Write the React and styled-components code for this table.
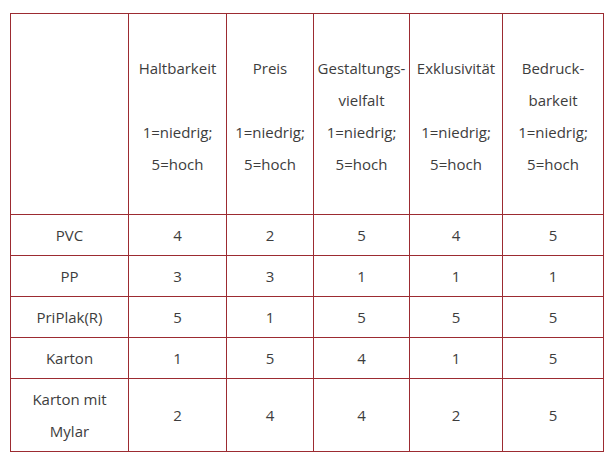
import React from 'react';
import styled, { createGlobalStyle } from 'styled-components';

const GlobalStyle = createGlobalStyle`
  body {
    margin: 0;
    background: #fff;
    font-family: "Open Sans", Tahoma, sans-serif;
  }
`;

const Page = styled.div`
  padding: 13px 9px 10px 10px;
`;

const Table = styled.table`
  border-collapse: collapse;
  table-layout: fixed;
  width: 593px;
  color: #3d3d3d;
  font-size: 15px;
  line-height: 32px;
`;

const Cell = styled.td`
  border: 1px solid #9c2b31;
  text-align: center;
  vertical-align: middle;
  padding: ${p => (p.head ? '4px 2px 0' : '0 2px')};
  font-weight: normal;
`;

const Row = styled.tr`
  height: ${p => p.h}px;
`;

const widths = [118, 98, 87, 96, 93, 101];

const headers = [
  ['Haltbarkeit', ''],
  ['Preis', ''],
  ['Gestaltungs-', 'vielfalt'],
  ['Exklusivität', ''],
  ['Bedruck-', 'barkeit']
];

const rows = [
  { name: ['PVC'], values: [4, 2, 5, 4, 5], h: 41 },
  { name: ['PP'], values: [3, 3, 1, 1, 1], h: 41 },
  { name: ['PriPlak(R)'], values: [5, 1, 5, 5, 5], h: 41 },
  { name: ['Karton'], values: [1, 5, 4, 1, 5], h: 41 },
  { name: ['Karton mit', 'Mylar'], values: [2, 4, 4, 2, 5], h: 73 }
];

export default function App() {
  return (
    <Page>
      <GlobalStyle />
      <Table>
        <colgroup>
          {widths.map((w, i) => (
            <col key={i} style={{ width: w }} />
          ))}
        </colgroup>
        <tbody>
          <Row h={201}>
            <Cell head />
            {headers.map((h, i) => (
              <Cell head key={i}>
                {h[0]}
                <br />
                {h[1] || '\u00a0'}
                <br />
                1=niedrig;
                <br />
                5=hoch
              </Cell>
            ))}
          </Row>
          {rows.map(r => (
            <Row h={r.h} key={r.name.join(' ')}>
              <Cell>
                {r.name.map((n, i) => (
                  <React.Fragment key={i}>
                    {i > 0 && <br />}
                    {n}
                  </React.Fragment>
                ))}
              </Cell>
              {r.values.map((v, i) => (
                <Cell key={i}>{v}</Cell>
              ))}
            </Row>
          ))}
        </tbody>
      </Table>
    </Page>
  );
}
